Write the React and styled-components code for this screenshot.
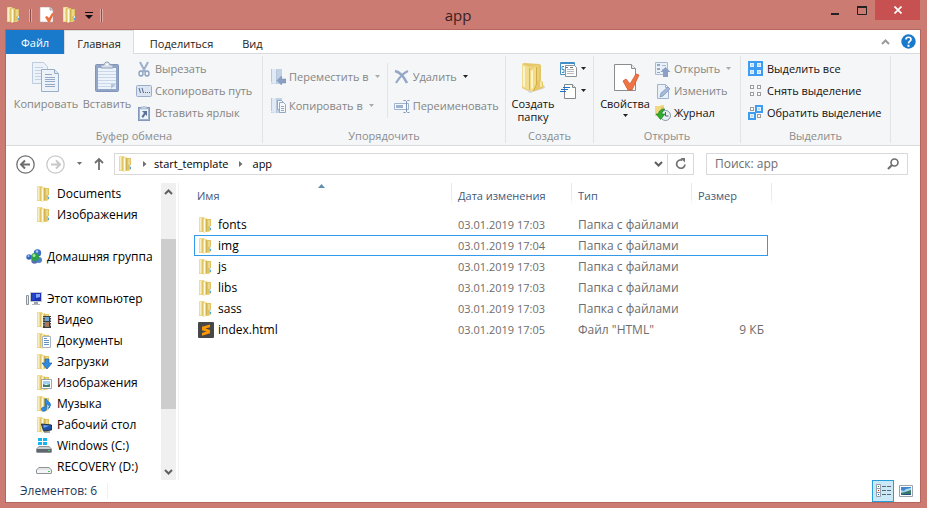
import React from "react";
import styled, { createGlobalStyle, css } from "styled-components";

const GlobalStyle = createGlobalStyle`
  *, *::before, *::after { box-sizing: border-box; }
  body {
    margin: 0;
    background: #cc7b73;
    color: #000;
    font: 12px/16px "Open Sans", "Noto Sans", sans-serif;
  }
  button, input { font: inherit; color: inherit; }
  svg { display: block; flex: none; }
`;

const resetButton = css`
  margin: 0;
  padding: 0;
  border: 0;
  background: none;
  cursor: default;
  white-space: nowrap;
`;

/* ---------- window frame ---------- */

const Frame = styled.div`
  display: flex;
  flex-direction: column;
  min-height: 100vh;
  padding-bottom: 5px;
  background: #cc7b73;
`;

const TitleBar = styled.header`
  display: grid;
  grid-template-columns: 1fr auto 1fr;
  height: 29px;
  padding-right: 7px;
`;

const QuickAccess = styled.div`
  display: flex;
  align-items: center;
  gap: 7px;
  padding-left: 6px;
`;

const QuickDivider = styled.span`
  width: 3px;
  height: 13px;
  border: solid #e2aaa4;
  border-width: 0 1px;
  background: #8a4f4a;
`;

const Title = styled.h1`
  margin: 0;
  padding: 0 4px 0 0;
  font-size: 15px;
  font-weight: 400;
  line-height: 30px;
  color: #3a2020;
`;

const WindowControls = styled.div`
  display: flex;
  justify-content: flex-end;
  align-items: flex-start;
`;

const ControlButton = styled.button`
  ${resetButton}
  display: grid;
  place-items: center;
  width: ${(p) => (p.$close ? 45 : 27)}px;
  height: 20px;
  background: ${(p) => (p.$close ? "#c75050" : "transparent")};
`;

const IconButton = styled.button`
  ${resetButton}
  display: grid;
  place-items: center;
`;

const Client = styled.main`
  flex: 1;
  display: flex;
  flex-direction: column;
  margin: 0 6px 0 5px;
  border: 1px solid #b4655e;
  background: #fff;
`;

/* ---------- tabs ---------- */

const Tabs = styled.nav`
  display: flex;
  height: 24px;
  border-bottom: 1px solid #dadbdc;
  font-size: 11px;
`;

const Tab = styled.button`
  ${resetButton}
  height: 24px;
  padding: 0 ${(p) => p.$pad || 12}px;
  border: 1px solid transparent;
  border-bottom: 0;
  line-height: 25px;
  color: #222;
  ${(p) =>
    p.$file &&
    css`
      border-color: #1979ca;
      background: #1979ca;
      line-height: 23px;
      color: #fff;
    `}
  ${(p) =>
    p.$active &&
    css`
      border-color: #dadbdc;
      background: #f5f6f7;
    `}
`;

const TabsEnd = styled.div`
  display: flex;
  align-items: center;
  gap: 11px;
  margin-left: auto;
  padding-right: 4px;
`;

/* ---------- ribbon ---------- */

const Ribbon = styled.div`
  display: flex;
  height: 92px;
  padding-top: 2px;
  border-bottom: 1px solid #dadbdc;
  background: #f5f6f7;
  font-size: 11px;
`;

const Group = styled.section`
  display: flex;
  flex-direction: column;
  flex: none;
  width: ${(p) => p.$width}px;
  height: 87px;
  border-right: 1px solid #e2e3e4;
`;

const GroupBody = styled.div`
  flex: 1;
  display: flex;
  align-items: flex-start;
  padding: 2px 0 0 ${(p) => p.$inset || 2}px;
`;

const GroupLabel = styled.h2`
  margin: 0;
  font-size: 11px;
  font-weight: 400;
  line-height: 14px;
  text-align: center;
  color: #8a8c8e;
`;

const BigButton = styled.button`
  ${resetButton}
  display: flex;
  flex-direction: column;
  align-items: center;
  gap: 4px;
  width: ${(p) => p.$width}px;
  padding-top: 3px;
  line-height: 13px;
  white-space: normal;
  color: ${(p) => (p.disabled ? "#858585" : "#111")};
`;

const Stack = styled.div`
  display: flex;
  flex-direction: column;
  gap: ${(p) => (p.$loose ? 7 : 0)}px;
  padding: ${(p) => (p.$loose ? 8 : 0)}px ${(p) => p.$end || 0}px 0 ${(p) => p.$start || 0}px;
`;

const StackDivider = styled.span`
  width: 1px;
  height: 55px;
  margin-top: 5px;
  background: #e2e3e4;
`;

const SmallButton = styled.button`
  ${resetButton}
  display: flex;
  align-items: center;
  gap: 3px;
  height: 22px;
  color: ${(p) => (p.disabled ? "#858585" : "#111")};
`;

/* ---------- address row ---------- */

const AddressRow = styled.div`
  display: flex;
  align-items: center;
  height: 37px;
  padding: 0 12px 1px 10px;
`;

const HistoryButtons = styled.div`
  display: flex;
  align-items: center;
  gap: 11px;
  margin-right: 10px;
`;

const AddressBar = styled.nav`
  flex: 1;
  display: flex;
  align-items: center;
  height: 22px;
  padding-left: 3px;
  border: 1px solid #d9d9d9;
`;

const Crumb = styled.button`
  ${resetButton}
  font-size: 11px;
  line-height: 20px;
`;

const CrumbArrow = styled.span`
  display: grid;
  place-items: center;
  width: ${(p) => (p.$wide ? 24 : 20)}px;
`;

const AddressActions = styled.div`
  display: flex;
  align-self: stretch;
  margin-left: auto;
`;

const AddressAction = styled(IconButton)`
  width: ${(p) => (p.$line ? 26 : 18)}px;
  border-left: ${(p) => (p.$line ? "1px solid #d9d9d9" : "0")};
`;

const Search = styled.label`
  display: flex;
  align-items: center;
  width: 202px;
  height: 22px;
  margin-left: 12px;
  padding: 0 8px;
  border: 1px solid #d9d9d9;
`;

const SearchInput = styled.input`
  flex: 1;
  min-width: 0;
  padding: 0;
  border: 0;
  outline: 0;
  background: none;
  &::placeholder { color: #6d6d6d; opacity: 1; }
`;

/* ---------- body ---------- */

const Body = styled.div`
  flex: 1;
  display: flex;
`;

const Sidebar = styled.aside`
  display: flex;
  width: 173px;
  border-right: 1px solid #f0f0f0;
`;

const Tree = styled.div`
  flex: 1;
  display: flex;
  flex-direction: column;
  gap: 21px;
`;

const TreeGroup = styled.ul`
  margin: 0;
  padding: 0;
  list-style: none;
`;

const TreeItem = styled.button`
  ${resetButton}
  display: flex;
  align-items: center;
  gap: 5px;
  height: 21px;
  padding-left: ${(p) => (p.$root ? 20 : 30)}px;
`;

const ScrollBar = styled.div`
  display: flex;
  flex-direction: column;
  width: 15px;
  margin-right: 2px;
  background: #f0f0f0;
`;

const ScrollButton = styled(IconButton)`
  height: 17px;
`;

const ScrollSpace = styled.div`
  flex: ${(p) => p.$part};
  background: ${(p) => (p.$thumb ? "#cdcdcd" : "transparent")};
`;

const Files = styled.section`
  flex: 1;
  padding-left: 15px;
`;

const Table = styled.table`
  width: 574px;
  table-layout: fixed;
  border-collapse: collapse;
`;

const HeadCell = styled.th`
  position: relative;
  width: ${(p) => p.$width}px;
  height: 31px;
  padding: 5px 0 0 ${(p) => (p.$first ? 3 : 6)}px;
  text-align: left;
  vertical-align: top;
  font-size: 11px;
  font-weight: 400;
  color: #43587a;
  &::after {
    content: "";
    position: absolute;
    top: 0;
    right: ${(p) => (p.$last ? -4 : 0)}px;
    width: 1px;
    height: 22px;
    background: linear-gradient(#dfe8f2, #e6edf5 70%, #fff);
  }
`;

const SortMark = styled.span`
  position: absolute;
  top: 1px;
  left: 48%;
`;

const Row = styled.tr`
  height: 21px;
  outline: ${(p) => (p.$focused ? "1px solid #3399ea" : "none")};
  outline-offset: -1px;
`;

const Cell = styled.td`
  padding: 0 4px 0 6px;
  font-size: ${(p) => (p.$compact ? 11 : 12)}px;
  text-align: ${(p) => (p.$end ? "right" : "left")};
  white-space: nowrap;
  color: #6d6d6d;
`;

const NameCell = styled(Cell)`
  padding-left: 4px;
  color: #000;
`;

const FileName = styled.span`
  display: flex;
  align-items: center;
  gap: 4px;
`;

const StatusBar = styled.footer`
  display: flex;
  align-items: center;
  height: 22px;
  padding: 0 6px 0 14px;
  color: #1e395b;
`;

const StatusCount = styled.span`
  padding-right: 10px;
  border-right: 1px solid #f0f0f0;
`;

const ViewButtons = styled.div`
  display: flex;
  align-items: center;
  gap: 4px;
  margin-left: auto;
`;

const ViewButton = styled(IconButton)`
  width: ${(p) => (p.$on ? 22 : 16)}px;
  height: 22px;
  border: ${(p) => (p.$on ? "1px solid #26a0da" : "0")};
  background: ${(p) => (p.$on ? "#cbe8f6" : "none")};
`;

/* ---------- icons ---------- */

const Icon = ({ w = 16, h = 16, children }) => (
  <svg width={w} height={h} viewBox={`0 0 ${w} ${h}`} fill="none" aria-hidden="true">
    {children}
  </svg>
);

const FolderShape = () => (
  <>
    <path d="M1 1l1-1h4l1 2h5l1 1v10l-2 2H1z" fill="#ead27c" />
    <path d="M1 1l1-1h3v15l-4-1z" fill="#f0dc93" />
    <path d="M2 1h1v13H2z" fill="#f9efc4" />
    <path d="M4 1h1v14H4z" fill="#dfc469" />
    <path d="M9 2h4v11l-4 1z" fill="#dfc364" />
    <path d="M10 3h2v6h-2z" fill="#ecd88d" />
    <path d="M5 2l4-1v13l-3 2-1-1z" fill="#f0db88" />
    <path d="M6 2.500l1-.3V15l-1 .6z" fill="#fffbe0" />
    <path d="M8 2h1v12l-1 .7z" fill="#d3b250" />
    <path d="M12 9h1v2h-1z" fill="#d9eefb" />
    <path d="M12 11h1v2h-1z" fill="#4fa3dd" />
  </>
);

const overlays = {
  video: (
    <>
      <path d="M7 4h8v12H7z" fill="#3b3f44" />
      <path d="M9 5h4v4H9z" fill="#6fa3cf" />
      <path d="M9 10h4v5H9z" fill="#a9785a" />
      <path d="M8 5v10M14.500 5v10" stroke="#fff" strokeDasharray="1 1.500" />
    </>
  ),
  document: (
    <>
      <path d="M6.500 3.500h8v11h-8z" fill="#fff" stroke="#a9b4bf" />
      <path d="M8 5.500h3M8 7.500h5M8 9.500h5M8 11.500h5" stroke="#5c93c9" />
    </>
  ),
  download: <path d="M9 5h4v4h3l-5 6-5-6h3z" fill="#2f8be0" stroke="#1c63ad" strokeWidth=".7" />,
  picture: (
    <>
      <path d="M5.500 4.500h10v9h-10z" fill="#fff" stroke="#9aa5b0" />
      <path d="M7 6h7v3H7z" fill="#9fd0f0" />
      <path d="M7 12V9l3 1 4-1v3z" fill="#3f7d72" />
    </>
  ),
  music: (
    <path
      d="M9 3h1.500c0 2 4.500 3 4 6l-1 3c0-2-1-3.500-3-4v5c0 3-5 3-5 .5C5.500 11 7.500 11 9 11z"
      fill="#2b8be4"
      stroke="#1862b0"
      strokeWidth=".6"
    />
  ),
  desktop: (
    <>
      <path d="M5.500 7l10 1v5l-8 1z" fill="#1c4fa8" stroke="#273447" />
      <path d="M7.500 8l6 .8-6 2.200z" fill="#6aa4ee" />
      <path d="M8 15h6" stroke="#4a5360" />
    </>
  ),
};

const Folder = ({ overlay }) => (
  <Icon>
    <FolderShape />
    {overlay && overlays[overlay]}
  </Icon>
);

const Homegroup = () => (
  <Icon>
    <circle cx="3" cy="8" r="2.700" fill="#3467c2" />
    <circle cx="11.500" cy="4" r="3.700" fill="#3f6fcd" />
    <circle cx="13" cy="11" r="3" fill="#4c82c9" />
    <circle cx="8.500" cy="11.500" r="3.200" fill="#5470b5" />
    <circle cx="9" cy="8" r="4" fill="#2fa043" />
    <circle cx="8" cy="6.500" r="1.500" fill="#a8e6a4" />
    <circle cx="11" cy="2.500" r="1.200" fill="#b9d2f7" />
    <circle cx="2.500" cy="7" r="1" fill="#a9c6f2" />
  </Icon>
);

const Computer = () => (
  <Icon>
    <path d="M.5 4.500h2v9h-2z" fill="#e7e9ec" stroke="#8c949c" />
    <path d="M4.500 1.500h11v9h-11z" fill="#1d2fb4" stroke="#c2c8d0" />
    <path d="M6 3h4l-1.500 6H6z" fill="#2344c8" />
    <path d="M10 3h4v3l-4 1z" fill="#7ba6f5" />
    <path d="M8 11h4v2H8z" fill="#9aa2ab" />
    <path d="M6 13.500h8" stroke="#b3bac2" />
  </Icon>
);

const Drive = ({ windows }) => (
  <Icon>
    {windows && (
      <path d="M2 0h4v3H2zM7 0h4v3H7zM2 4h4v3H2zM7 4h4v3H7z" fill="#15b4ef" />
    )}
    <path d="M3 8h10l3 3v3l-1 1H1l-1-1v-3z" fill={windows ? "#8d9399" : "#8f9397"} />
    <path d="M3 9h10l2 2H1z" fill={windows ? "#c9cdd1" : "#e3e5e7"} />
    <path d="M1 11h14v3H1z" fill={windows ? "#5f666d" : "#f3f4f5"} />
    <path d="M12 12h2v1h-2z" fill="#3bd15a" />
  </Icon>
);

const Sublime = () => (
  <Icon>
    <rect width="16" height="16" rx="1" fill="#474747" />
    <path d="M4 4.800l8-2.300v2.700L7.500 6.500 12 8v3.300L4 13.700V11l4.500-1.400L4 8.200z" fill="#ff9800" />
  </Icon>
);

const PageCheck = ({ large }) =>
  large ? (
    <Icon w={32} h={32}>
      <path d="M5.500 3.500h17l4 4v22h-21z" fill="#fff" stroke="#8a8d90" />
      <path d="M22.500 3.500v4h4" fill="#eceded" stroke="#8a8d90" />
      <path d="M14 20l3-2 4 5 6-10 3 1-7 15h-4z" fill="#ee7445" stroke="#d9572b" strokeWidth=".8" />
    </Icon>
  ) : (
    <Icon>
      <path d="M1 0h10l3 3v12H1z" fill="#fff" stroke="#b9a3a0" strokeWidth=".6" />
      <path d="M11 0v3h3" fill="#e3e3e3" stroke="#777" strokeWidth=".6" />
      <path d="M6 10l2-1 2 2 3-5 2 .5-4 8.500H9z" fill="#ee6f3e" />
    </Icon>
  );

const pageFill = "#edf2f9";
const Copy = () => (
  <Icon w={32} h={32}>
    <path d="M2.500 1.500h11l4 4v17h-15z" fill={pageFill} stroke="#bdcbe0" />
    <path d="M5 6.500h8M5 9.500h6M5 12.500h6M5 15.500h6M5 18.500h6" stroke="#c5d2e5" />
    <path d="M11.500 8.500h13l4 4v18h-17z" fill={pageFill} stroke="#98aecb" />
    <path d="M24.500 8.500v4h4" fill="#dbe5f2" stroke="#98aecb" />
    <path d="M15 13.500h7M15 16.500h10M15 18.500h10M15 20.500h10M15 23.500h10M15 25.500h10" stroke="#93a9c8" />
  </Icon>
);

const Paste = () => (
  <Icon w={32} h={32}>
    <rect x="4.500" y="3.500" width="23" height="27" rx="1" fill="#93a5c7" stroke="#8194b9" />
    <path d="M7 7h18v21H7z" fill="#edf3fa" />
    <path d="M7 10.500h18M7 13.500h18M7 16.500h18M7 19.500h18M7 22.500h18M7 25.500h18" stroke="#c9d7e8" />
    <path d="M20 28v-5h5z" fill="#b4c4db" />
    <path d="M10 7V4h3c0-4 6-4 6 0h3v3z" fill="#d7dfea" stroke="#8e9fbc" />
    <circle cx="16" cy="3.500" r="1" fill="#fff" />
  </Icon>
);

const Cut = () => (
  <Icon>
    <path d="M4 1l5 9.500M12 1L7 10.500" stroke="#9cafcc" strokeWidth="2" />
    <ellipse cx="5" cy="12.500" rx="2" ry="2.500" stroke="#8ea2c2" strokeWidth="1.400" />
    <ellipse cx="11" cy="12.500" rx="2" ry="2.500" stroke="#8ea2c2" strokeWidth="1.400" />
  </Icon>
);

const CopyPath = () => (
  <Icon>
    <rect x=".5" y="2.500" width="15" height="11" rx="1" fill="#dbe5f2" stroke="#9badc9" />
    <path d="M3 5l1.500 5M6 5l1.500 5" stroke="#50648a" />
    <path d="M9 9.500h1M11 9.500h1M13 9.500h1" stroke="#50648a" />
  </Icon>
);

const PasteLink = () => (
  <Icon>
    <rect x="2.500" y="2.500" width="11" height="13" fill="#9fb0cd" stroke="#8598ba" />
    <path d="M4 4h8v10H4z" fill="#edf3fa" />
    <path d="M5 4V2h2l1-1 1 1h2v2z" fill="#cbd6e6" stroke="#8598ba" strokeWidth=".5" />
    <path d="M6 6h5v5L9.500 9.500 7 13l-1.500-1.500L8 8z" fill="#5d7299" />
  </Icon>
);

const FolderFaded = ({ copy }) => (
  <Icon>
    <path d="M1 0h11v15H1z" fill="#c3d1e5" />
    <path d="M1 0h5v15l-5-1z" fill="#e0e9f4" />
    <path d="M6.500 1v14M1.500 0v13" stroke="#b7c7de" />
    {copy ? (
      <>
        <path d="M7.500 2.500h4l2 2v7h-6z" fill="#f4f7fb" stroke="#93a8c7" />
        <path d="M9.500 4.500h4l2 2v8h-6z" fill="#f4f7fb" stroke="#93a8c7" />
        <path d="M11 8.500h3M11 10.500h3M11 12.500h3" stroke="#93a8c7" />
      </>
    ) : (
      <path d="M7 11.500L11.500 7v3H16v4h-4.500v2z" fill="#8ba0c3" stroke="#7289b0" strokeWidth=".5" />
    )}
  </Icon>
);

const Delete = () => (
  <Icon>
    <path d="M1 2c5 1 9 6 12 12" stroke="#94a7c4" strokeWidth="2.600" />
    <path d="M14 2C9 4 5 9 2 14" stroke="#94a7c4" strokeWidth="2" />
  </Icon>
);

const Rename = () => (
  <Icon>
    <path d="M.5 5.500h14v6H.5z" fill="#f7f9fc" stroke="#9fb2cf" />
    <path d="M2 7h7v3H2z" fill="#9db3d3" />
    <path d="M12.500 3v11M9.500 2.500h2l1 1 1-1h2M9.500 14.500h2l1-1 1 1h2" stroke="#8298bb" />
  </Icon>
);

const FolderLarge = () => (
  <Icon w={32} h={32}>
    <path d="M8 28l5 4 15-5-1-3z" fill="#d2d4d7" />
    <path d="M5 3l2-1 15 1 2 1v16l2 1v6l-9 3-8-1-4-2z" fill="#e6c765" />
    <path d="M13 5l9-1v15l-9 7z" fill="#ead07a" />
    <path d="M5 3l8 3v24l-8-4z" fill="#f1dc90" />
    <path d="M6 5l2 1v20l-2-1z" fill="#fbf3cd" />
    <path d="M13 9l7-4v18l-4 8-4-2z" fill="#f3dc85" />
    <path d="M14 10l2-1v18l-2 1z" fill="#fdf5c9" />
    <path d="M19.500 6v17l-3 7" stroke="#d3ae48" />
    <path d="M12.500 7v22" stroke="#d6b552" />
    <path d="M23 20l2 1v5h-2z" fill="#f6e7a9" />
  </Icon>
);

const NewItem = () => (
  <Icon w={17}>
    <path d="M.5 1.500h14v12H.5z" fill="#fff" stroke="#4a90c2" />
    <path d="M1 1h13v2H1z" fill="#3f8fc9" />
    <path d="M4 5.500H2v3h2v3H2" stroke="#3f8fc9" />
    <path d="M5.500 4.500h9l2 2v9h-11z" fill="#fff" stroke="#8c9196" />
    <path d="M7 8.500h7M7 10.500h7M7 12.500h7" stroke="#b5babf" />
    <path d="M6 6.500h2M10 6.500h3" stroke="#777" />
  </Icon>
);

const EasyAccess = () => (
  <Icon w={17}>
    <path d="M4.500 1.500h8l3 3v11h-11z" fill="#fff" stroke="#85898e" />
    <path d="M12.500 1.500v3h3" fill="#e6e8ea" stroke="#85898e" />
    <path d="M3 4.500h7M1 6.500h7M0 8.500h6" stroke="#1a74c9" />
  </Icon>
);

const OpenItem = () => (
  <Icon>
    <path d="M.5 1.500h12v12H.5z" fill="#eaf0f8" stroke="#a9bad3" />
    <path d="M2 3h3v2H2zM2 7h3v2H2zM2 11h3v1H2z" fill="#93a9ca" />
    <path d="M7 4.500h4M7 8.500h3" stroke="#a9bad3" />
    <path d="M10.500 6l5 5H13v5H8v-5H5.500z" fill="#8ba0c3" />
  </Icon>
);

const Edit = () => (
  <Icon>
    <path d="M2.500 1.500h8l3 3v11h-11z" fill="#e9f0f8" stroke="#a0b4d1" />
    <path d="M10.500 1.500v3h3" stroke="#a0b4d1" />
    <path d="M5 14l1-4 7-6 2 2-7 7z" fill="#a5b9d8" stroke="#7d95bb" strokeWidth=".7" />
  </Icon>
);

const History = () => (
  <Icon>
    <path d="M0 1h5l1-1h3v11H0z" fill="#f0d982" />
    <path d="M6 2h3v8H6z" fill="#e3c35f" />
    <circle cx="10.500" cy="10.500" r="5" fill="#e9eff5" stroke="#8493a3" />
    <path d="M10.500 7v4h3" stroke="#4f6072" />
    <path d="M10 4C6 4 3.500 6 3.500 9H1l4.500 5.500L10 9H7c0-2 1-3.500 3-5z" fill="#2fae2f" stroke="#137a17" strokeWidth=".6" />
  </Icon>
);

const SelectTile = ({ x, y, on }) => (
  <>
    {on && <rect x={x - 2} y={y - 2} width="8" height="8" fill="#3f9cf0" />}
    <rect
      x={x + 0.5}
      y={y + 0.5}
      width="3"
      height="3"
      fill={on ? "#b9dcfb" : "#fff"}
      stroke={on ? "#e3f1fd" : "#9c9c9c"}
    />
  </>
);

const SelectIcon = ({ on }) => (
  <Icon>
    {[
      [2, 2],
      [9, 2],
      [2, 9],
      [9, 9],
    ].map(([x, y], i) => (
      <SelectTile key={i} x={x} y={y} on={on.includes(i)} />
    ))}
  </Icon>
);

const Caret = ({ color = "#222" }) => (
  <Icon w={7} h={4}>
    <path d="M1 0h5L3.500 3z" fill={color} />
  </Icon>
);

const CaretBox = styled.span`
  padding-left: 2px;
`;

const Chevron = ({ up, color = "#606060" }) => (
  <Icon w={9} h={8}>
    <path d={up ? "M1 6l3.500-3.500L8 6" : "M1 2l3.500 3.500L8 2"} stroke={color} strokeWidth="2" />
  </Icon>
);

const CircleArrow = ({ forward }) => {
  const color = forward ? "#c8c8c8" : "#6e6e6e";
  return (
    <Icon w={19} h={19}>
      <circle cx="9.500" cy="9.500" r="8.700" stroke={color} strokeWidth="1.300" />
      <path
        d={forward ? "M5 9.500h9M10 5.500l4 4-4 4" : "M14 9.500H5M9 5.500l-4 4 4 4"}
        stroke={color}
        strokeWidth="2"
      />
    </Icon>
  );
};

const UpArrow = () => (
  <Icon w={10} h={14}>
    <path d="M5 13V2M1 6l4-4 4 4" stroke="#6e6e6e" strokeWidth="1.800" />
  </Icon>
);

const PathArrow = () => (
  <Icon w={5} h={8}>
    <path d="M1 1l3.500 3L1 7z" fill="#6e6e6e" />
  </Icon>
);

const Refresh = () => (
  <Icon w={12} h={12}>
    <path d="M7.500 2.200A4.200 4.200 0 1 0 10 6.500" stroke="#737373" strokeWidth="1.700" />
    <path d="M5.500 0H10v4.500z" fill="#737373" />
  </Icon>
);

const Magnifier = () => (
  <Icon w={12} h={12}>
    <circle cx="7.500" cy="4.500" r="3.500" stroke="#6e6e6e" strokeWidth="1.600" />
    <path d="M5 7L1 11" stroke="#6e6e6e" strokeWidth="2.200" />
  </Icon>
);

const Help = () => (
  <Icon w={15} h={15}>
    <circle cx="7.500" cy="7.500" r="7.200" fill="#1979ca" />
    <path d="M5 5.500C5 2.500 10 2.500 10 5.500c0 1.700-2.500 1.700-2.500 4" stroke="#fff" strokeWidth="1.700" />
    <path d="M6.500 10.800h2v2h-2z" fill="#fff" />
  </Icon>
);

const DetailsView = () => (
  <Icon>
    <path d="M1.500 1.500h4v4h-4zM1.500 5.500h4v4h-4zM1.500 9.500h4v4h-4z" fill="#fff" stroke="#93a0ad" />
    <path d="M3 3.500h1" stroke="#2a8f3a" />
    <path d="M3 7.500h1" stroke="#d02020" />
    <path d="M3 11.500h1" stroke="#2050d0" />
    <path d="M7 3.500h4M12 3.500h4M7 7.500h4M12 7.500h4M7 11.500h4M12 11.500h4" stroke="#5d6873" />
  </Icon>
);

const ThumbsView = () => (
  <Icon w={14} h={12}>
    <path d="M.5.5h13v11H.5z" fill="#fff" stroke="#9aa3ac" />
    <path d="M2 2h10v8H2z" fill="#a8d8f2" />
    <path d="M2 2h10v1L7 4 5 6 2 5z" fill="#3f86cc" />
    <path d="M2 10V8l4-1 6-2v5z" fill="#3b7a6a" />
    <path d="M2 10l5-1h5v1z" fill="#1f4f80" />
  </Icon>
);

/* ---------- data ---------- */

const tree = [
  [
    { label: "Documents", icon: <Folder /> },
    { label: "Изображения", icon: <Folder /> },
  ],
  [{ label: "Домашняя группа", icon: <Homegroup />, root: true }],
  [
    { label: "Этот компьютер", icon: <Computer />, root: true },
    { label: "Видео", icon: <Folder overlay="video" /> },
    { label: "Документы", icon: <Folder overlay="document" /> },
    { label: "Загрузки", icon: <Folder overlay="download" /> },
    { label: "Изображения", icon: <Folder overlay="picture" /> },
    { label: "Музыка", icon: <Folder overlay="music" /> },
    { label: "Рабочий стол", icon: <Folder overlay="desktop" /> },
    { label: "Windows (C:)", icon: <Drive windows /> },
    { label: "RECOVERY (D:)", icon: <Drive /> },
  ],
];

const files = [
  { name: "fonts", date: "03.01.2019 17:03", type: "Папка с файлами" },
  { name: "img", date: "03.01.2019 17:04", type: "Папка с файлами", focused: true },
  { name: "js", date: "03.01.2019 17:03", type: "Папка с файлами" },
  { name: "libs", date: "03.01.2019 17:03", type: "Папка с файлами" },
  { name: "sass", date: "03.01.2019 17:03", type: "Папка с файлами" },
  { name: "index.html", date: "03.01.2019 17:05", type: 'Файл "HTML"', size: "9 КБ", icon: <Sublime /> },
];

const RibbonGroup = ({ label, width, inset, children }) => (
  <Group $width={width} aria-label={label}>
    <GroupBody $inset={inset}>{children}</GroupBody>
    <GroupLabel>{label}</GroupLabel>
  </Group>
);

const MenuCaret = ({ color }) => (
  <CaretBox>
    <Caret color={color} />
  </CaretBox>
);

export default function App() {
  return (
    <Frame>
      <GlobalStyle />
      <TitleBar>
        <QuickAccess>
          <Folder />
          <QuickDivider />
          <IconButton aria-label="Свойства"><PageCheck /></IconButton>
          <IconButton aria-label="Создать папку"><Folder /></IconButton>
          <IconButton aria-label="Настройка панели">
            <Icon w={8} h={8}>
              <path d="M0 1.500h8" stroke="#111" />
              <path d="M0 4h8L4 8z" fill="#111" />
            </Icon>
          </IconButton>
          <QuickDivider />
        </QuickAccess>
        <Title>app</Title>
        <WindowControls>
          <ControlButton aria-label="Свернуть">
            <Icon w={10} h={12}><path d="M1 10h8" stroke="#222" strokeWidth="2" /></Icon>
          </ControlButton>
          <ControlButton aria-label="Развернуть">
            <Icon w={10} h={9}>
              <path d="M.5 1v7.500h9V1" stroke="#222" />
              <path d="M0 1h10" stroke="#222" strokeWidth="2" />
            </Icon>
          </ControlButton>
          <ControlButton $close aria-label="Закрыть">
            <Icon w={8} h={8}><path d="M.5.5l7 7M7.500.5l-7 7" stroke="#fff" strokeWidth="1.700" /></Icon>
          </ControlButton>
        </WindowControls>
      </TitleBar>

      <Client>
        <Tabs aria-label="Лента">
          <Tab $file $pad={14}>Файл</Tab>
          <Tab $active>Главная</Tab>
          <Tab $pad={15}>Поделиться</Tab>
          <Tab>Вид</Tab>
          <TabsEnd>
            <IconButton aria-label="Свернуть ленту"><Chevron up color="#9a9a9a" /></IconButton>
            <IconButton aria-label="Справка"><Help /></IconButton>
          </TabsEnd>
        </Tabs>

        <Ribbon>
          <RibbonGroup label="Буфер обмена" width={257} inset={6}>
            <BigButton $width={68} disabled><Copy />Копировать</BigButton>
            <BigButton $width={54} disabled><Paste />Вставить</BigButton>
            <Stack $start={2}>
              <SmallButton disabled><Cut />Вырезать</SmallButton>
              <SmallButton disabled><CopyPath />Скопировать путь</SmallButton>
              <SmallButton disabled><PasteLink />Вставить ярлык</SmallButton>
            </Stack>
          </RibbonGroup>

          <RibbonGroup label="Упорядочить" width={243} inset={7}>
            <Stack $loose $end={6}>
              <SmallButton disabled><FolderFaded />Переместить в<MenuCaret color="#aaa" /></SmallButton>
              <SmallButton disabled><FolderFaded copy />Копировать в<MenuCaret color="#aaa" /></SmallButton>
            </Stack>
            <StackDivider />
            <Stack $loose $start={6}>
              <SmallButton disabled><Delete />Удалить<MenuCaret /></SmallButton>
              <SmallButton disabled><Rename />Переименовать</SmallButton>
            </Stack>
          </RibbonGroup>

          <RibbonGroup label="Создать" width={88}>
            <BigButton $width={50}><FolderLarge />Создать папку</BigButton>
            <Stack $start={2}>
              <SmallButton aria-label="Создать элемент"><NewItem /><Caret /></SmallButton>
              <SmallButton aria-label="Простой доступ"><EasyAccess /><Caret /></SmallButton>
            </Stack>
          </RibbonGroup>

          <RibbonGroup label="Открыть" width={147} inset={4}>
            <BigButton $width={54}><PageCheck large />Свойства<Caret /></BigButton>
            <Stack $start={3}>
              <SmallButton disabled><OpenItem />Открыть<MenuCaret color="#aaa" /></SmallButton>
              <SmallButton disabled><Edit />Изменить</SmallButton>
              <SmallButton><History />Журнал</SmallButton>
            </Stack>
          </RibbonGroup>

          <RibbonGroup label="Выделить" width={150} inset={7}>
            <Stack>
              <SmallButton><SelectIcon on={[0, 1, 2, 3]} />Выделить все</SmallButton>
              <SmallButton><SelectIcon on={[]} />Снять выделение</SmallButton>
              <SmallButton><SelectIcon on={[1, 2]} />Обратить выделение</SmallButton>
            </Stack>
          </RibbonGroup>
        </Ribbon>

        <AddressRow>
          <HistoryButtons>
            <IconButton aria-label="Назад"><CircleArrow /></IconButton>
            <IconButton aria-label="Вперед"><CircleArrow forward /></IconButton>
            <IconButton aria-label="Последние расположения"><Caret color="#6e6e6e" /></IconButton>
            <IconButton aria-label="Вверх"><UpArrow /></IconButton>
          </HistoryButtons>
          <AddressBar aria-label="Адрес">
            <Folder />
            <CrumbArrow><PathArrow /></CrumbArrow>
            <Crumb>start_template</Crumb>
            <CrumbArrow $wide><PathArrow /></CrumbArrow>
            <Crumb>app</Crumb>
            <AddressActions>
              <AddressAction aria-label="Предыдущие адреса"><Chevron /></AddressAction>
              <AddressAction $line aria-label="Обновить"><Refresh /></AddressAction>
            </AddressActions>
          </AddressBar>
          <Search>
            <SearchInput type="search" placeholder="Поиск: app" aria-label="Поиск: app" />
            <Magnifier />
          </Search>
        </AddressRow>

        <Body>
          <Sidebar>
            <Tree>
              {tree.map((group, i) => (
                <TreeGroup key={i}>
                  {group.map((item) => (
                    <li key={item.label}>
                      <TreeItem $root={item.root}>{item.icon}{item.label}</TreeItem>
                    </li>
                  ))}
                </TreeGroup>
              ))}
            </Tree>
            <ScrollBar>
              <ScrollButton aria-label="Прокрутить вверх"><Chevron up /></ScrollButton>
              <ScrollSpace $part={39} />
              <ScrollSpace $part={170} $thumb />
              <ScrollSpace $part={54} />
              <ScrollButton aria-label="Прокрутить вниз"><Chevron /></ScrollButton>
            </ScrollBar>
          </Sidebar>

          <Files>
            <Table>
              <thead>
                <tr>
                  <HeadCell $width={258} $first aria-sort="ascending">
                    Имя
                    <SortMark>
                      <Icon w={7} h={4}><path d="M0 4l3.500-4L7 4z" fill="#5f8fae" /></Icon>
                    </SortMark>
                  </HeadCell>
                  <HeadCell $width={120}>Дата изменения</HeadCell>
                  <HeadCell $width={120}>Тип</HeadCell>
                  <HeadCell $width={76} $last>Размер</HeadCell>
                </tr>
              </thead>
              <tbody>
                {files.map((file) => (
                  <Row key={file.name} $focused={file.focused}>
                    <NameCell>
                      <FileName>{file.icon || <Folder />}{file.name}</FileName>
                    </NameCell>
                    <Cell $compact>{file.date}</Cell>
                    <Cell>{file.type}</Cell>
                    <Cell $end>{file.size}</Cell>
                  </Row>
                ))}
              </tbody>
            </Table>
          </Files>
        </Body>

        <StatusBar>
          <StatusCount>Элементов: 6</StatusCount>
          <ViewButtons>
            <ViewButton $on aria-label="Таблица"><DetailsView /></ViewButton>
            <ViewButton aria-label="Крупные значки"><ThumbsView /></ViewButton>
          </ViewButtons>
        </StatusBar>
      </Client>
    </Frame>
  );
}
